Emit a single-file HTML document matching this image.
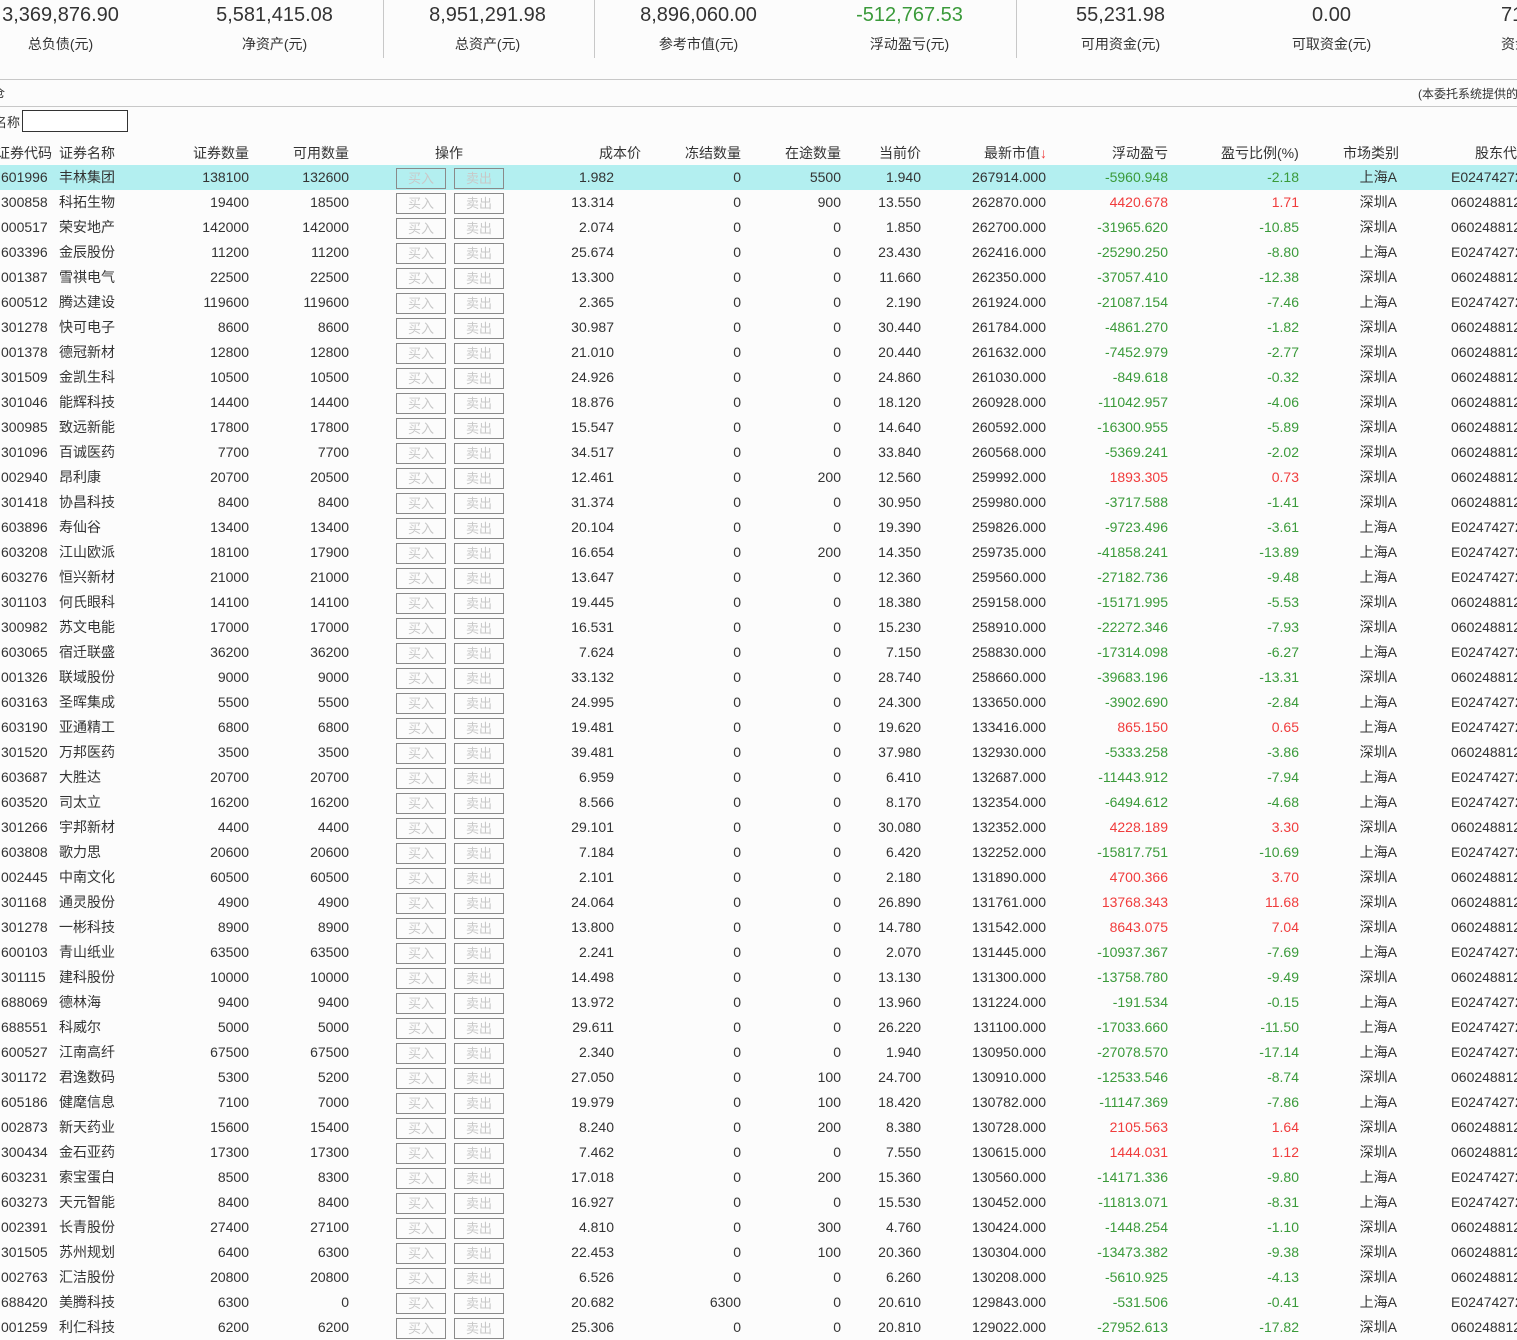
<!DOCTYPE html>
<html><head><meta charset="utf-8">
<style>
html,body{margin:0;padding:0;background:#fcfcfc;}
body{width:1517px;height:1336px;overflow:hidden;position:relative;font-family:"Liberation Sans","Noto Sans CJK SC",sans-serif;color:#333;font-size:14px;}
.sum{position:absolute;top:1px;width:211px;text-align:center;}
.sum .n{font-size:20px;line-height:28px;color:#333;}
.sum .n.g{color:#3a9a3a;}
.sum .l{font-size:14px;margin-top:5px;}
.vl{position:absolute;top:0;width:1px;height:58px;background:#c8c8c8;}
.hl{position:absolute;left:0;width:1517px;height:1px;background:#c8c8c8;}
.h{position:absolute;top:143px;white-space:nowrap;}
table{position:absolute;left:0;top:165px;border-collapse:collapse;table-layout:fixed;width:1650px;}
td{padding:0;height:25px;white-space:nowrap;overflow:hidden;text-align:right;line-height:25px;}
td.l{text-align:left;}
tr.sel td{background:#b3eff0;}
.b{display:inline-block;box-sizing:border-box;width:50px;height:21px;border:1px solid #8a8a8a;color:#c8c8c8;font-size:13px;line-height:19px;text-align:center;vertical-align:middle;}
.g{color:#3a9a3a;}.r{color:#f03c3c;}
</style></head><body>
<div class="sum" style="left:-45px"><div class="n">3,369,876.90</div><div class="l">总负债(元)</div></div>
<div class="sum" style="left:169px"><div class="n">5,581,415.08</div><div class="l">净资产(元)</div></div>
<div class="sum" style="left:382px"><div class="n">8,951,291.98</div><div class="l">总资产(元)</div></div>
<div class="sum" style="left:593px"><div class="n">8,896,060.00</div><div class="l">参考市值(元)</div></div>
<div class="sum" style="left:804px"><div class="n g">-512,767.53</div><div class="l">浮动盈亏(元)</div></div>
<div class="sum" style="left:1015px"><div class="n">55,231.98</div><div class="l">可用资金(元)</div></div>
<div class="sum" style="left:1226px"><div class="n">0.00</div><div class="l">可取资金(元)</div></div>
<div style="position:absolute;left:1501px;top:1px;white-space:nowrap"><div style="font-size:20px;line-height:28px">71,232.55</div><div style="margin-top:5px">资金余额(元)</div></div>
<div class="vl" style="left:383px"></div><div class="vl" style="left:594px"></div><div class="vl" style="left:1016px"></div>
<div class="hl" style="top:79px"></div><div class="hl" style="top:106px"></div>
<div style="position:absolute;left:-7px;top:84px;font-size:12px">仓</div>
<div style="position:absolute;left:1418px;top:85px;font-size:12px;white-space:nowrap">(本委托系统提供的</div>
<div style="position:absolute;left:-6px;top:112px;font-size:13px">名称</div>
<div style="position:absolute;left:22px;top:110px;width:104px;height:20px;border:1px solid #333;background:#fff"></div>
<div class="h" style="left:-4px">证券代码</div>
<div class="h" style="left:59px">证券名称</div>
<div class="h" style="left:193px">证券数量</div>
<div class="h" style="left:293px">可用数量</div>
<div class="h" style="left:435px">操作</div>
<div class="h" style="left:599px">成本价</div>
<div class="h" style="left:685px">冻结数量</div>
<div class="h" style="left:785px">在途数量</div>
<div class="h" style="left:879px">当前价</div>
<div class="h" style="left:984px">最新市值<span style="color:#f03c3c">↓</span></div>
<div class="h" style="left:1112px">浮动盈亏</div>
<div class="h" style="left:1221px">盈亏比例(%)</div>
<div class="h" style="left:1343px">市场类别</div>
<div class="h" style="left:1475px">股东代码</div>
<table>
<colgroup><col style="width:57px"><col style="width:93px"><col style="width:99px"><col style="width:100px"><col style="width:160px"><col style="width:105px"><col style="width:127px"><col style="width:100px"><col style="width:80px"><col style="width:125px"><col style="width:122px"><col style="width:131px"><col style="width:98px"><col style="width:253px"></colgroup>
<tbody>
<tr class="sel"><td class="l" style="padding-left:1px">601996</td><td class="l" style="padding-left:2px">丰林集团</td><td>138100</td><td>132600</td><td class="l"><span class="b" style="margin-left:47px">买入</span><span class="b" style="margin-left:8px">卖出</span></td><td>1.982</td><td>0</td><td>5500</td><td>1.940</td><td>267914.000</td><td class="g">-5960.948</td><td class="g">-2.18</td><td>上海A</td><td class="l" style="padding-left:54px">E024742722</td></tr>
<tr><td class="l" style="padding-left:1px">300858</td><td class="l" style="padding-left:2px">科拓生物</td><td>19400</td><td>18500</td><td class="l"><span class="b" style="margin-left:47px">买入</span><span class="b" style="margin-left:8px">卖出</span></td><td>13.314</td><td>0</td><td>900</td><td>13.550</td><td>262870.000</td><td class="r">4420.678</td><td class="r">1.71</td><td>深圳A</td><td class="l" style="padding-left:54px">0602488123</td></tr>
<tr><td class="l" style="padding-left:1px">000517</td><td class="l" style="padding-left:2px">荣安地产</td><td>142000</td><td>142000</td><td class="l"><span class="b" style="margin-left:47px">买入</span><span class="b" style="margin-left:8px">卖出</span></td><td>2.074</td><td>0</td><td>0</td><td>1.850</td><td>262700.000</td><td class="g">-31965.620</td><td class="g">-10.85</td><td>深圳A</td><td class="l" style="padding-left:54px">0602488123</td></tr>
<tr><td class="l" style="padding-left:1px">603396</td><td class="l" style="padding-left:2px">金辰股份</td><td>11200</td><td>11200</td><td class="l"><span class="b" style="margin-left:47px">买入</span><span class="b" style="margin-left:8px">卖出</span></td><td>25.674</td><td>0</td><td>0</td><td>23.430</td><td>262416.000</td><td class="g">-25290.250</td><td class="g">-8.80</td><td>上海A</td><td class="l" style="padding-left:54px">E024742722</td></tr>
<tr><td class="l" style="padding-left:1px">001387</td><td class="l" style="padding-left:2px">雪祺电气</td><td>22500</td><td>22500</td><td class="l"><span class="b" style="margin-left:47px">买入</span><span class="b" style="margin-left:8px">卖出</span></td><td>13.300</td><td>0</td><td>0</td><td>11.660</td><td>262350.000</td><td class="g">-37057.410</td><td class="g">-12.38</td><td>深圳A</td><td class="l" style="padding-left:54px">0602488123</td></tr>
<tr><td class="l" style="padding-left:1px">600512</td><td class="l" style="padding-left:2px">腾达建设</td><td>119600</td><td>119600</td><td class="l"><span class="b" style="margin-left:47px">买入</span><span class="b" style="margin-left:8px">卖出</span></td><td>2.365</td><td>0</td><td>0</td><td>2.190</td><td>261924.000</td><td class="g">-21087.154</td><td class="g">-7.46</td><td>上海A</td><td class="l" style="padding-left:54px">E024742722</td></tr>
<tr><td class="l" style="padding-left:1px">301278</td><td class="l" style="padding-left:2px">快可电子</td><td>8600</td><td>8600</td><td class="l"><span class="b" style="margin-left:47px">买入</span><span class="b" style="margin-left:8px">卖出</span></td><td>30.987</td><td>0</td><td>0</td><td>30.440</td><td>261784.000</td><td class="g">-4861.270</td><td class="g">-1.82</td><td>深圳A</td><td class="l" style="padding-left:54px">0602488123</td></tr>
<tr><td class="l" style="padding-left:1px">001378</td><td class="l" style="padding-left:2px">德冠新材</td><td>12800</td><td>12800</td><td class="l"><span class="b" style="margin-left:47px">买入</span><span class="b" style="margin-left:8px">卖出</span></td><td>21.010</td><td>0</td><td>0</td><td>20.440</td><td>261632.000</td><td class="g">-7452.979</td><td class="g">-2.77</td><td>深圳A</td><td class="l" style="padding-left:54px">0602488123</td></tr>
<tr><td class="l" style="padding-left:1px">301509</td><td class="l" style="padding-left:2px">金凯生科</td><td>10500</td><td>10500</td><td class="l"><span class="b" style="margin-left:47px">买入</span><span class="b" style="margin-left:8px">卖出</span></td><td>24.926</td><td>0</td><td>0</td><td>24.860</td><td>261030.000</td><td class="g">-849.618</td><td class="g">-0.32</td><td>深圳A</td><td class="l" style="padding-left:54px">0602488123</td></tr>
<tr><td class="l" style="padding-left:1px">301046</td><td class="l" style="padding-left:2px">能辉科技</td><td>14400</td><td>14400</td><td class="l"><span class="b" style="margin-left:47px">买入</span><span class="b" style="margin-left:8px">卖出</span></td><td>18.876</td><td>0</td><td>0</td><td>18.120</td><td>260928.000</td><td class="g">-11042.957</td><td class="g">-4.06</td><td>深圳A</td><td class="l" style="padding-left:54px">0602488123</td></tr>
<tr><td class="l" style="padding-left:1px">300985</td><td class="l" style="padding-left:2px">致远新能</td><td>17800</td><td>17800</td><td class="l"><span class="b" style="margin-left:47px">买入</span><span class="b" style="margin-left:8px">卖出</span></td><td>15.547</td><td>0</td><td>0</td><td>14.640</td><td>260592.000</td><td class="g">-16300.955</td><td class="g">-5.89</td><td>深圳A</td><td class="l" style="padding-left:54px">0602488123</td></tr>
<tr><td class="l" style="padding-left:1px">301096</td><td class="l" style="padding-left:2px">百诚医药</td><td>7700</td><td>7700</td><td class="l"><span class="b" style="margin-left:47px">买入</span><span class="b" style="margin-left:8px">卖出</span></td><td>34.517</td><td>0</td><td>0</td><td>33.840</td><td>260568.000</td><td class="g">-5369.241</td><td class="g">-2.02</td><td>深圳A</td><td class="l" style="padding-left:54px">0602488123</td></tr>
<tr><td class="l" style="padding-left:1px">002940</td><td class="l" style="padding-left:2px">昂利康</td><td>20700</td><td>20500</td><td class="l"><span class="b" style="margin-left:47px">买入</span><span class="b" style="margin-left:8px">卖出</span></td><td>12.461</td><td>0</td><td>200</td><td>12.560</td><td>259992.000</td><td class="r">1893.305</td><td class="r">0.73</td><td>深圳A</td><td class="l" style="padding-left:54px">0602488123</td></tr>
<tr><td class="l" style="padding-left:1px">301418</td><td class="l" style="padding-left:2px">协昌科技</td><td>8400</td><td>8400</td><td class="l"><span class="b" style="margin-left:47px">买入</span><span class="b" style="margin-left:8px">卖出</span></td><td>31.374</td><td>0</td><td>0</td><td>30.950</td><td>259980.000</td><td class="g">-3717.588</td><td class="g">-1.41</td><td>深圳A</td><td class="l" style="padding-left:54px">0602488123</td></tr>
<tr><td class="l" style="padding-left:1px">603896</td><td class="l" style="padding-left:2px">寿仙谷</td><td>13400</td><td>13400</td><td class="l"><span class="b" style="margin-left:47px">买入</span><span class="b" style="margin-left:8px">卖出</span></td><td>20.104</td><td>0</td><td>0</td><td>19.390</td><td>259826.000</td><td class="g">-9723.496</td><td class="g">-3.61</td><td>上海A</td><td class="l" style="padding-left:54px">E024742722</td></tr>
<tr><td class="l" style="padding-left:1px">603208</td><td class="l" style="padding-left:2px">江山欧派</td><td>18100</td><td>17900</td><td class="l"><span class="b" style="margin-left:47px">买入</span><span class="b" style="margin-left:8px">卖出</span></td><td>16.654</td><td>0</td><td>200</td><td>14.350</td><td>259735.000</td><td class="g">-41858.241</td><td class="g">-13.89</td><td>上海A</td><td class="l" style="padding-left:54px">E024742722</td></tr>
<tr><td class="l" style="padding-left:1px">603276</td><td class="l" style="padding-left:2px">恒兴新材</td><td>21000</td><td>21000</td><td class="l"><span class="b" style="margin-left:47px">买入</span><span class="b" style="margin-left:8px">卖出</span></td><td>13.647</td><td>0</td><td>0</td><td>12.360</td><td>259560.000</td><td class="g">-27182.736</td><td class="g">-9.48</td><td>上海A</td><td class="l" style="padding-left:54px">E024742722</td></tr>
<tr><td class="l" style="padding-left:1px">301103</td><td class="l" style="padding-left:2px">何氏眼科</td><td>14100</td><td>14100</td><td class="l"><span class="b" style="margin-left:47px">买入</span><span class="b" style="margin-left:8px">卖出</span></td><td>19.445</td><td>0</td><td>0</td><td>18.380</td><td>259158.000</td><td class="g">-15171.995</td><td class="g">-5.53</td><td>深圳A</td><td class="l" style="padding-left:54px">0602488123</td></tr>
<tr><td class="l" style="padding-left:1px">300982</td><td class="l" style="padding-left:2px">苏文电能</td><td>17000</td><td>17000</td><td class="l"><span class="b" style="margin-left:47px">买入</span><span class="b" style="margin-left:8px">卖出</span></td><td>16.531</td><td>0</td><td>0</td><td>15.230</td><td>258910.000</td><td class="g">-22272.346</td><td class="g">-7.93</td><td>深圳A</td><td class="l" style="padding-left:54px">0602488123</td></tr>
<tr><td class="l" style="padding-left:1px">603065</td><td class="l" style="padding-left:2px">宿迁联盛</td><td>36200</td><td>36200</td><td class="l"><span class="b" style="margin-left:47px">买入</span><span class="b" style="margin-left:8px">卖出</span></td><td>7.624</td><td>0</td><td>0</td><td>7.150</td><td>258830.000</td><td class="g">-17314.098</td><td class="g">-6.27</td><td>上海A</td><td class="l" style="padding-left:54px">E024742722</td></tr>
<tr><td class="l" style="padding-left:1px">001326</td><td class="l" style="padding-left:2px">联域股份</td><td>9000</td><td>9000</td><td class="l"><span class="b" style="margin-left:47px">买入</span><span class="b" style="margin-left:8px">卖出</span></td><td>33.132</td><td>0</td><td>0</td><td>28.740</td><td>258660.000</td><td class="g">-39683.196</td><td class="g">-13.31</td><td>深圳A</td><td class="l" style="padding-left:54px">0602488123</td></tr>
<tr><td class="l" style="padding-left:1px">603163</td><td class="l" style="padding-left:2px">圣晖集成</td><td>5500</td><td>5500</td><td class="l"><span class="b" style="margin-left:47px">买入</span><span class="b" style="margin-left:8px">卖出</span></td><td>24.995</td><td>0</td><td>0</td><td>24.300</td><td>133650.000</td><td class="g">-3902.690</td><td class="g">-2.84</td><td>上海A</td><td class="l" style="padding-left:54px">E024742722</td></tr>
<tr><td class="l" style="padding-left:1px">603190</td><td class="l" style="padding-left:2px">亚通精工</td><td>6800</td><td>6800</td><td class="l"><span class="b" style="margin-left:47px">买入</span><span class="b" style="margin-left:8px">卖出</span></td><td>19.481</td><td>0</td><td>0</td><td>19.620</td><td>133416.000</td><td class="r">865.150</td><td class="r">0.65</td><td>上海A</td><td class="l" style="padding-left:54px">E024742722</td></tr>
<tr><td class="l" style="padding-left:1px">301520</td><td class="l" style="padding-left:2px">万邦医药</td><td>3500</td><td>3500</td><td class="l"><span class="b" style="margin-left:47px">买入</span><span class="b" style="margin-left:8px">卖出</span></td><td>39.481</td><td>0</td><td>0</td><td>37.980</td><td>132930.000</td><td class="g">-5333.258</td><td class="g">-3.86</td><td>深圳A</td><td class="l" style="padding-left:54px">0602488123</td></tr>
<tr><td class="l" style="padding-left:1px">603687</td><td class="l" style="padding-left:2px">大胜达</td><td>20700</td><td>20700</td><td class="l"><span class="b" style="margin-left:47px">买入</span><span class="b" style="margin-left:8px">卖出</span></td><td>6.959</td><td>0</td><td>0</td><td>6.410</td><td>132687.000</td><td class="g">-11443.912</td><td class="g">-7.94</td><td>上海A</td><td class="l" style="padding-left:54px">E024742722</td></tr>
<tr><td class="l" style="padding-left:1px">603520</td><td class="l" style="padding-left:2px">司太立</td><td>16200</td><td>16200</td><td class="l"><span class="b" style="margin-left:47px">买入</span><span class="b" style="margin-left:8px">卖出</span></td><td>8.566</td><td>0</td><td>0</td><td>8.170</td><td>132354.000</td><td class="g">-6494.612</td><td class="g">-4.68</td><td>上海A</td><td class="l" style="padding-left:54px">E024742722</td></tr>
<tr><td class="l" style="padding-left:1px">301266</td><td class="l" style="padding-left:2px">宇邦新材</td><td>4400</td><td>4400</td><td class="l"><span class="b" style="margin-left:47px">买入</span><span class="b" style="margin-left:8px">卖出</span></td><td>29.101</td><td>0</td><td>0</td><td>30.080</td><td>132352.000</td><td class="r">4228.189</td><td class="r">3.30</td><td>深圳A</td><td class="l" style="padding-left:54px">0602488123</td></tr>
<tr><td class="l" style="padding-left:1px">603808</td><td class="l" style="padding-left:2px">歌力思</td><td>20600</td><td>20600</td><td class="l"><span class="b" style="margin-left:47px">买入</span><span class="b" style="margin-left:8px">卖出</span></td><td>7.184</td><td>0</td><td>0</td><td>6.420</td><td>132252.000</td><td class="g">-15817.751</td><td class="g">-10.69</td><td>上海A</td><td class="l" style="padding-left:54px">E024742722</td></tr>
<tr><td class="l" style="padding-left:1px">002445</td><td class="l" style="padding-left:2px">中南文化</td><td>60500</td><td>60500</td><td class="l"><span class="b" style="margin-left:47px">买入</span><span class="b" style="margin-left:8px">卖出</span></td><td>2.101</td><td>0</td><td>0</td><td>2.180</td><td>131890.000</td><td class="r">4700.366</td><td class="r">3.70</td><td>深圳A</td><td class="l" style="padding-left:54px">0602488123</td></tr>
<tr><td class="l" style="padding-left:1px">301168</td><td class="l" style="padding-left:2px">通灵股份</td><td>4900</td><td>4900</td><td class="l"><span class="b" style="margin-left:47px">买入</span><span class="b" style="margin-left:8px">卖出</span></td><td>24.064</td><td>0</td><td>0</td><td>26.890</td><td>131761.000</td><td class="r">13768.343</td><td class="r">11.68</td><td>深圳A</td><td class="l" style="padding-left:54px">0602488123</td></tr>
<tr><td class="l" style="padding-left:1px">301278</td><td class="l" style="padding-left:2px">一彬科技</td><td>8900</td><td>8900</td><td class="l"><span class="b" style="margin-left:47px">买入</span><span class="b" style="margin-left:8px">卖出</span></td><td>13.800</td><td>0</td><td>0</td><td>14.780</td><td>131542.000</td><td class="r">8643.075</td><td class="r">7.04</td><td>深圳A</td><td class="l" style="padding-left:54px">0602488123</td></tr>
<tr><td class="l" style="padding-left:1px">600103</td><td class="l" style="padding-left:2px">青山纸业</td><td>63500</td><td>63500</td><td class="l"><span class="b" style="margin-left:47px">买入</span><span class="b" style="margin-left:8px">卖出</span></td><td>2.241</td><td>0</td><td>0</td><td>2.070</td><td>131445.000</td><td class="g">-10937.367</td><td class="g">-7.69</td><td>上海A</td><td class="l" style="padding-left:54px">E024742722</td></tr>
<tr><td class="l" style="padding-left:1px">301115</td><td class="l" style="padding-left:2px">建科股份</td><td>10000</td><td>10000</td><td class="l"><span class="b" style="margin-left:47px">买入</span><span class="b" style="margin-left:8px">卖出</span></td><td>14.498</td><td>0</td><td>0</td><td>13.130</td><td>131300.000</td><td class="g">-13758.780</td><td class="g">-9.49</td><td>深圳A</td><td class="l" style="padding-left:54px">0602488123</td></tr>
<tr><td class="l" style="padding-left:1px">688069</td><td class="l" style="padding-left:2px">德林海</td><td>9400</td><td>9400</td><td class="l"><span class="b" style="margin-left:47px">买入</span><span class="b" style="margin-left:8px">卖出</span></td><td>13.972</td><td>0</td><td>0</td><td>13.960</td><td>131224.000</td><td class="g">-191.534</td><td class="g">-0.15</td><td>上海A</td><td class="l" style="padding-left:54px">E024742722</td></tr>
<tr><td class="l" style="padding-left:1px">688551</td><td class="l" style="padding-left:2px">科威尔</td><td>5000</td><td>5000</td><td class="l"><span class="b" style="margin-left:47px">买入</span><span class="b" style="margin-left:8px">卖出</span></td><td>29.611</td><td>0</td><td>0</td><td>26.220</td><td>131100.000</td><td class="g">-17033.660</td><td class="g">-11.50</td><td>上海A</td><td class="l" style="padding-left:54px">E024742722</td></tr>
<tr><td class="l" style="padding-left:1px">600527</td><td class="l" style="padding-left:2px">江南高纤</td><td>67500</td><td>67500</td><td class="l"><span class="b" style="margin-left:47px">买入</span><span class="b" style="margin-left:8px">卖出</span></td><td>2.340</td><td>0</td><td>0</td><td>1.940</td><td>130950.000</td><td class="g">-27078.570</td><td class="g">-17.14</td><td>上海A</td><td class="l" style="padding-left:54px">E024742722</td></tr>
<tr><td class="l" style="padding-left:1px">301172</td><td class="l" style="padding-left:2px">君逸数码</td><td>5300</td><td>5200</td><td class="l"><span class="b" style="margin-left:47px">买入</span><span class="b" style="margin-left:8px">卖出</span></td><td>27.050</td><td>0</td><td>100</td><td>24.700</td><td>130910.000</td><td class="g">-12533.546</td><td class="g">-8.74</td><td>深圳A</td><td class="l" style="padding-left:54px">0602488123</td></tr>
<tr><td class="l" style="padding-left:1px">605186</td><td class="l" style="padding-left:2px">健麾信息</td><td>7100</td><td>7000</td><td class="l"><span class="b" style="margin-left:47px">买入</span><span class="b" style="margin-left:8px">卖出</span></td><td>19.979</td><td>0</td><td>100</td><td>18.420</td><td>130782.000</td><td class="g">-11147.369</td><td class="g">-7.86</td><td>上海A</td><td class="l" style="padding-left:54px">E024742722</td></tr>
<tr><td class="l" style="padding-left:1px">002873</td><td class="l" style="padding-left:2px">新天药业</td><td>15600</td><td>15400</td><td class="l"><span class="b" style="margin-left:47px">买入</span><span class="b" style="margin-left:8px">卖出</span></td><td>8.240</td><td>0</td><td>200</td><td>8.380</td><td>130728.000</td><td class="r">2105.563</td><td class="r">1.64</td><td>深圳A</td><td class="l" style="padding-left:54px">0602488123</td></tr>
<tr><td class="l" style="padding-left:1px">300434</td><td class="l" style="padding-left:2px">金石亚药</td><td>17300</td><td>17300</td><td class="l"><span class="b" style="margin-left:47px">买入</span><span class="b" style="margin-left:8px">卖出</span></td><td>7.462</td><td>0</td><td>0</td><td>7.550</td><td>130615.000</td><td class="r">1444.031</td><td class="r">1.12</td><td>深圳A</td><td class="l" style="padding-left:54px">0602488123</td></tr>
<tr><td class="l" style="padding-left:1px">603231</td><td class="l" style="padding-left:2px">索宝蛋白</td><td>8500</td><td>8300</td><td class="l"><span class="b" style="margin-left:47px">买入</span><span class="b" style="margin-left:8px">卖出</span></td><td>17.018</td><td>0</td><td>200</td><td>15.360</td><td>130560.000</td><td class="g">-14171.336</td><td class="g">-9.80</td><td>上海A</td><td class="l" style="padding-left:54px">E024742722</td></tr>
<tr><td class="l" style="padding-left:1px">603273</td><td class="l" style="padding-left:2px">天元智能</td><td>8400</td><td>8400</td><td class="l"><span class="b" style="margin-left:47px">买入</span><span class="b" style="margin-left:8px">卖出</span></td><td>16.927</td><td>0</td><td>0</td><td>15.530</td><td>130452.000</td><td class="g">-11813.071</td><td class="g">-8.31</td><td>上海A</td><td class="l" style="padding-left:54px">E024742722</td></tr>
<tr><td class="l" style="padding-left:1px">002391</td><td class="l" style="padding-left:2px">长青股份</td><td>27400</td><td>27100</td><td class="l"><span class="b" style="margin-left:47px">买入</span><span class="b" style="margin-left:8px">卖出</span></td><td>4.810</td><td>0</td><td>300</td><td>4.760</td><td>130424.000</td><td class="g">-1448.254</td><td class="g">-1.10</td><td>深圳A</td><td class="l" style="padding-left:54px">0602488123</td></tr>
<tr><td class="l" style="padding-left:1px">301505</td><td class="l" style="padding-left:2px">苏州规划</td><td>6400</td><td>6300</td><td class="l"><span class="b" style="margin-left:47px">买入</span><span class="b" style="margin-left:8px">卖出</span></td><td>22.453</td><td>0</td><td>100</td><td>20.360</td><td>130304.000</td><td class="g">-13473.382</td><td class="g">-9.38</td><td>深圳A</td><td class="l" style="padding-left:54px">0602488123</td></tr>
<tr><td class="l" style="padding-left:1px">002763</td><td class="l" style="padding-left:2px">汇洁股份</td><td>20800</td><td>20800</td><td class="l"><span class="b" style="margin-left:47px">买入</span><span class="b" style="margin-left:8px">卖出</span></td><td>6.526</td><td>0</td><td>0</td><td>6.260</td><td>130208.000</td><td class="g">-5610.925</td><td class="g">-4.13</td><td>深圳A</td><td class="l" style="padding-left:54px">0602488123</td></tr>
<tr><td class="l" style="padding-left:1px">688420</td><td class="l" style="padding-left:2px">美腾科技</td><td>6300</td><td>0</td><td class="l"><span class="b" style="margin-left:47px">买入</span><span class="b" style="margin-left:8px">卖出</span></td><td>20.682</td><td>6300</td><td>0</td><td>20.610</td><td>129843.000</td><td class="g">-531.506</td><td class="g">-0.41</td><td>上海A</td><td class="l" style="padding-left:54px">E024742722</td></tr>
<tr><td class="l" style="padding-left:1px">001259</td><td class="l" style="padding-left:2px">利仁科技</td><td>6200</td><td>6200</td><td class="l"><span class="b" style="margin-left:47px">买入</span><span class="b" style="margin-left:8px">卖出</span></td><td>25.306</td><td>0</td><td>0</td><td>20.810</td><td>129022.000</td><td class="g">-27952.613</td><td class="g">-17.82</td><td>深圳A</td><td class="l" style="padding-left:54px">0602488123</td></tr>
</tbody></table>
</body></html>
